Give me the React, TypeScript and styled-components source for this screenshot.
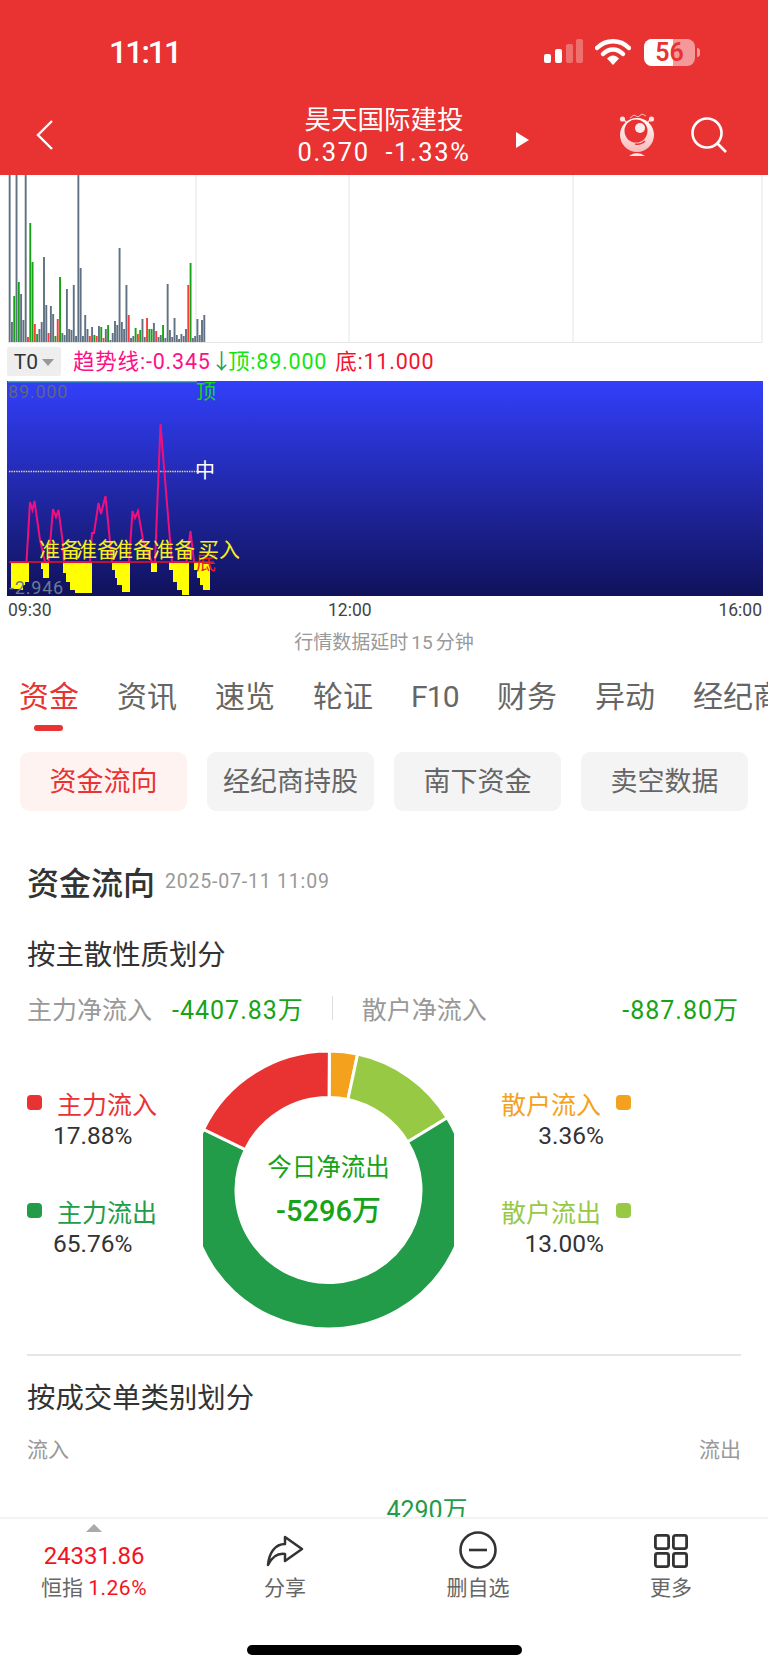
import React from "react";
import styled, { createGlobalStyle } from "styled-components";

const GlobalStyle = createGlobalStyle`
    html, body {
        margin: 0;
        padding: 0;
        background: #fff;
    }
    * {
        box-sizing: border-box;
    }
`;

const FONT = `Roboto, "Noto Sans CJK SC", sans-serif`;

// [颜色, 高度] g=灰 s=绿 r=红
const VOLUME: [string, number][] = [
    ["g", 168], ["g", 20], ["s", 46], ["g", 168], ["s", 60], ["g", 48], ["g", 22], ["g", 168],
    ["r", 5], ["s", 119], ["s", 80], ["r", 18], ["s", 8], ["g", 13], ["g", 20], ["g", 85],
    ["g", 37], ["r", 9], ["g", 36], ["g", 28], ["s", 6], ["r", 23], ["s", 65], ["g", 9],
    ["g", 7], ["g", 53], ["g", 13], ["g", 12], ["g", 57], ["g", 6], ["g", 168], ["g", 74],
    ["g", 6], ["g", 27], ["g", 13], ["r", 6], ["g", 15], ["s", 7], ["r", 6], ["g", 16],
    ["s", 15], ["r", 4], ["g", 13], ["s", 17], ["g", 2], ["g", 9], ["g", 21], ["g", 17],
    ["g", 94], ["g", 20], ["g", 13], ["g", 57], ["r", 27], ["g", 4], ["g", 6], ["s", 14],
    ["r", 8], ["s", 12], ["g", 23], ["g", 5], ["r", 24], ["s", 13], ["s", 13], ["g", 19],
    ["r", 11], ["g", 5], ["g", 7], ["s", 17], ["g", 4], ["g", 58], ["g", 12], ["g", 5],
    ["g", 24], ["g", 7], ["g", 3], ["g", 8], ["g", 6], ["g", 13], ["r", 57], ["s", 79],
    ["g", 4], ["g", 6], ["g", 23], ["g", 7], ["g", 22], ["g", 27],
];

const BAR_COLORS: Record<string, string> = { g: "#5f7183", s: "#17a317", r: "#f83b3b" };

const PINK = [
    [10, 562], [26.5, 562], [30, 502], [32.5, 510], [34.5, 501], [40, 540], [45, 562], [48.5, 562],
    [53, 509], [56, 517], [58.5, 510], [62.5, 540], [64, 562], [90, 562], [92, 533], [94, 533],
    [98.5, 503], [101, 514], [105.5, 496], [112, 562], [129, 562], [132.5, 511], [135, 518],
    [138, 511], [143, 540], [148, 553], [152, 562], [155, 562], [160.5, 424], [170, 540],
    [172, 562], [186.5, 562], [190.5, 531], [194, 562],
];

// x 起点, 终点, 底部折点
const YELLOW: [number, number][][] = [
    [[11, 589], [20, 590], [23, 585], [25, 582], [29, 580]],
    [[41, 569], [43, 578], [49, 578]],
    [[63, 573], [66, 582], [70, 590], [75, 593], [91, 593], [92, 563]],
    [[112, 570], [115, 578], [117, 585], [122, 592], [130, 593]],
    [[151, 572], [157, 572]],
    [[169, 570], [173, 582], [177, 590], [182, 595], [189, 596]],
    [[194, 570], [197, 578], [200, 585], [203, 590], [210, 590]],
];

const yellowPath = (steps: [number, number][]) => {
    const endX = steps[steps.length - 1][0];
    let d = `M${steps[0][0]} 562.5`;
    steps.forEach(([x, y], i) => {
        if (i > 0) d += `L${x} ${steps[i - 1][1]}`;
        d += `L${x} ${y}`;
    });
    return `${d}L${endX} 562.5Z`;
};

const OUTER = 139;
const INNER = 92.5;

const polar = (r: number, pct: number) => {
    const a = (pct / 100) * Math.PI * 2;
    return [137 + r * Math.sin(a), 137 - r * Math.cos(a)];
};

const slice = (from: number, to: number) => {
    const [x1, y1] = polar(OUTER, from);
    const [x2, y2] = polar(OUTER, to);
    const [x3, y3] = polar(INNER, to);
    const [x4, y4] = polar(INNER, from);
    const large = to - from > 50 ? 1 : 0;
    return `M${x1} ${y1}A${OUTER} ${OUTER} 0 ${large} 1 ${x2} ${y2}L${x3} ${y3}A${INNER} ${INNER} 0 ${large} 0 ${x4} ${y4}Z`;
};

const SLICES = [
    { color: "#f4a21d", from: 0.1, to: 3.36 },
    { color: "#97c945", from: 3.36, to: 16.3 },
    { color: "#229c48", from: 16.3, to: 82.2 },
    { color: "#e93333", from: 82.2, to: 100.1 },
];

const TABS = ["资金", "资讯", "速览", "轮证", "F10", "财务", "异动", "经纪商"];
const CHIPS = ["资金流向", "经纪商持股", "南下资金", "卖空数据"];

const StatusIcons = () => (
    <StatusRight>
        <svg width="40" height="26" viewBox="0 0 40 26">
            <rect x="1" y="15" width="7" height="9" rx="2" fill="#fff" />
            <rect x="12" y="10" width="7" height="14" rx="2" fill="#fff" />
            <rect x="23" y="5" width="7" height="19" rx="2" fill="#fff" opacity="0.3" />
            <rect x="33" y="0" width="7" height="24" rx="2" fill="#fff" opacity="0.3" />
        </svg>
        <svg width="36" height="26" viewBox="0 0 36 26">
            <path d="M2 9C11 0 25 0 34 9" fill="none" stroke="#fff" strokeWidth="4.5" strokeLinecap="round" />
            <path d="M8 15C14 9 22 9 28 15" fill="none" stroke="#fff" strokeWidth="4.5" strokeLinecap="round" />
            <path d="M12 19.5C16 15.5 20 15.5 24 19.5L18 26Z" fill="#fff" />
        </svg>
        <Battery>
            <BatteryFill />
            <BatteryText>56</BatteryText>
        </Battery>
        <BatteryTip />
    </StatusRight>
);

const Mascot = () => (
    <svg width="36" height="46" viewBox="0 0 36 46">
        <defs>
            <linearGradient id="mascotBody" x1="0" y1="0" x2="0" y2="1">
                <stop offset="0" stopColor="#fff" />
                <stop offset="1" stopColor="#f8b9b9" />
            </linearGradient>
        </defs>
        <path d="M11 6L15 3L19 5L23 2L27 4" fill="none" stroke="#f9c4c4" strokeWidth="1" />
        <circle cx="3.5" cy="7" r="2.6" fill="#fde3e3" />
        <circle cx="32.5" cy="7" r="2.6" fill="#fde3e3" />
        <path d="M5 8L9 12M31 8L27 12" stroke="#fde3e3" strokeWidth="1.4" />
        <ellipse cx="18" cy="23" rx="17" ry="17" fill="url(#mascotBody)" />
        <circle cx="17" cy="19" r="11.5" fill="#e93333" />
        <circle cx="21" cy="16" r="5" fill="#fff" opacity="0.9" />
        <path d="M16 32Q22 33 26 29" fill="none" stroke="#e93333" strokeWidth="1.4" />
        <path d="M10 44Q18 38 26 44Z" fill="#fde3e3" />
    </svg>
);

const SearchIcon = () => (
    <svg width="36" height="36" viewBox="0 0 36 36">
        <circle cx="16" cy="16" r="14.5" fill="none" stroke="#fff" strokeWidth="2.6" />
        <path d="M26.5 26.5L35 35" stroke="#fff" strokeWidth="2.6" />
    </svg>
);

const App = () => {
    return (
        <Page>
            <GlobalStyle />
            <Header>
                <StatusBar>
                    <Clock>11:11</Clock>
                    <StatusIcons />
                </StatusBar>
                <NavBar>
                    <NavSide>
                        <svg width="18" height="30" viewBox="0 0 18 30">
                            <path d="M16 1L2 15L16 29" fill="none" stroke="#fff" strokeWidth="2.4" />
                        </svg>
                    </NavSide>
                    <NavCenter>
                        <StockName>昊天国际建投</StockName>
                        <StockQuote>0.370&nbsp;&nbsp;-1.33%</StockQuote>
                    </NavCenter>
                    <NavRight>
                        <NextArrow />
                        <Mascot />
                        <SearchIcon />
                    </NavRight>
                </NavBar>
            </Header>

            <VolumeChart viewBox="0 175 768 168" width="768" height="168">
                {[196, 349, 573, 762].map((x) => (
                    <line key={x} x1={x} x2={x} y1="175" y2="342" stroke="#e6e6e6" />
                ))}
                <line x1="8" x2="762" y1="342.5" y2="342.5" stroke="#e6e6e6" />
                {VOLUME.map(([c, h], i) => (
                    <rect
                        key={i}
                        x={8.7 + i * 2.29}
                        y={342 - h}
                        width="1.9"
                        height={h}
                        fill={BAR_COLORS[c]}
                    />
                ))}
            </VolumeChart>

            <IndicatorRow>
                <T0Button>
                    T0
                    <T0Caret />
                </T0Button>
                <IndicatorText $color="#ff0f87">趋势线:-0.345</IndicatorText>
                <IndicatorText $color="#2e9c55">↓</IndicatorText>
                <IndicatorText $color="#12e512" $gap={-5}>
                    顶:89.000
                </IndicatorText>
                <IndicatorText $color="#f5122e" $gap={8}>
                    底:11.000
                </IndicatorText>
            </IndicatorRow>

            <SignalChart viewBox="7 381 756 215" width="756" height="215">
                <defs>
                    <linearGradient id="signalBg" x1="0" y1="0" x2="0" y2="1">
                        <stop offset="0" stopColor="#323ffa" />
                        <stop offset="1" stopColor="#10125a" />
                    </linearGradient>
                </defs>
                <rect x="7" y="381" width="756" height="215" fill="url(#signalBg)" />
                <line x1="8" x2="197" y1="381.5" y2="381.5" stroke="#14e614" strokeWidth="1.4" />
                <text x="8" y="398" fill="#5f6680" fontSize="18" letterSpacing="0.8">89.000</text>
                <text x="196" y="399" fill="#16d816" fontSize="20">顶</text>
                <line x1="9" x2="197" y1="471.5" y2="471.5" stroke="#e8e07a" strokeWidth="1.4" strokeDasharray="1.4 1" />
                <text x="195" y="478" fill="#fff" fontSize="20">中</text>
                {YELLOW.map((s, i) => (
                    <path key={i} d={yellowPath(s)} fill="#ffff00" />
                ))}
                <polyline
                    points={PINK.map((p) => p.join(",")).join(" ")}
                    fill="none"
                    stroke="#f00f7d"
                    strokeWidth="2"
                />
                <line x1="9" x2="214" y1="562" y2="562" stroke="#f50f1e" strokeWidth="1.4" />
                <text x="196" y="570" fill="#f01e1e" fontSize="20">底</text>
                {[39, 76, 112, 153].map((x) => (
                    <text key={x} x={x} y="557" fill="#f5f01e" fontSize="21">准备</text>
                ))}
                <text x="198" y="557" fill="#f5f01e" fontSize="21">买入</text>
                <text x="9" y="594" fill="#6a7a95" fontSize="18" letterSpacing="0.8">-2.946</text>
            </SignalChart>

            <TimeAxis>
                <span>09:30</span>
                <span>12:00</span>
                <span>16:00</span>
            </TimeAxis>
            <DelayNote>
                行情数据延时<DelayDigits>15</DelayDigits>分钟
            </DelayNote>

            <TabRow>
                {TABS.map((t, i) => (
                    <Tab key={t} $active={i === 0} $tight={t === "F10"}>
                        {t}
                    </Tab>
                ))}
            </TabRow>

            <ChipRow>
                {CHIPS.map((c, i) => (
                    <Chip key={c} $active={i === 0}>
                        {c}
                    </Chip>
                ))}
            </ChipRow>

            <Content>
                <TitleRow>
                    <Title>资金流向</Title>
                    <TitleDate>2025-07-11 11:09</TitleDate>
                </TitleRow>
                <SubTitle $top={35}>按主散性质划分</SubTitle>
                <NetRow>
                    <NetLabel>主力净流入</NetLabel>
                    <NetValue>-4407.83万</NetValue>
                    <NetDivider />
                    <NetLabel>散户净流入</NetLabel>
                    <NetValue $right>-887.80万</NetValue>
                </NetRow>

                <DonutRow>
                    <LegendColumn>
                        <LegendItem>
                            <LegendName $color="#e93333">
                                <LegendDot $color="#e93333" />
                                主力流入
                            </LegendName>
                            <LegendValue>17.88%</LegendValue>
                        </LegendItem>
                        <LegendItem>
                            <LegendName $color="#229c48">
                                <LegendDot $color="#229c48" />
                                主力流出
                            </LegendName>
                            <LegendValue>65.76%</LegendValue>
                        </LegendItem>
                    </LegendColumn>
                    <Donut>
                        <svg width="251" height="276" viewBox="11.5 -1 251 276">
                            {SLICES.map((s) => (
                                <path key={s.color} d={slice(s.from, s.to)} fill={s.color} stroke="#fff" strokeWidth="3" />
                            ))}
                        </svg>
                        <DonutCenter>
                            <DonutCaption>今日净流出</DonutCaption>
                            <DonutAmount>-5296万</DonutAmount>
                        </DonutCenter>
                    </Donut>
                    <LegendColumn $right>
                        <LegendItem $right>
                            <LegendName $color="#f4a21d" $right>
                                <LegendDot $color="#f4a21d" />
                                散户流入
                            </LegendName>
                            <LegendValue $right>3.36%</LegendValue>
                        </LegendItem>
                        <LegendItem $right>
                            <LegendName $color="#97c945" $right>
                                <LegendDot $color="#97c945" />
                                散户流出
                            </LegendName>
                            <LegendValue $right>13.00%</LegendValue>
                        </LegendItem>
                    </LegendColumn>
                </DonutRow>

                <Separator />
                <SubTitle $top={23}>按成交单类别划分</SubTitle>
                <FlowHead>
                    <span>流入</span>
                    <span>流出</span>
                </FlowHead>
                <FlowAmount>4290万</FlowAmount>
            </Content>

            <Footer>
                <FooterGrid>
                    <FooterItem>
                        <FooterTop>
                            <IndexCaret />
                            <IndexValue>24331.86</IndexValue>
                        </FooterTop>
                        <FooterLabel>
                            恒指 <IndexChange>1.26%</IndexChange>
                        </FooterLabel>
                    </FooterItem>
                    <FooterItem>
                        <FooterTop>
                            <svg width="38" height="34" viewBox="0 0 38 34">
                                <path
                                    d="M19 2L36 14L19 26V19C12 18 6 22 2 30C3 18 9 9 19 9Z"
                                    fill="none"
                                    stroke="#333"
                                    strokeWidth="2.5"
                                    strokeLinejoin="round"
                                />
                            </svg>
                        </FooterTop>
                        <FooterLabel>分享</FooterLabel>
                    </FooterItem>
                    <FooterItem>
                        <FooterTop>
                            <svg width="38" height="38" viewBox="0 0 38 38">
                                <circle cx="19" cy="19" r="17.5" fill="none" stroke="#333" strokeWidth="2.6" />
                                <path d="M10 19H28" stroke="#333" strokeWidth="2.6" />
                            </svg>
                        </FooterTop>
                        <FooterLabel>删自选</FooterLabel>
                    </FooterItem>
                    <FooterItem>
                        <FooterTop>
                            <svg width="34" height="35" viewBox="0 0 34 35">
                                {[1.4, 19.4].map((x) =>
                                    [1.4, 19.4].map((y) => (
                                        <rect
                                            key={`${x}-${y}`}
                                            x={x}
                                            y={y}
                                            width="13.2"
                                            height="13.2"
                                            rx="2"
                                            fill="none"
                                            stroke="#333"
                                            strokeWidth="2.8"
                                        />
                                    )),
                                )}
                            </svg>
                        </FooterTop>
                        <FooterLabel>更多</FooterLabel>
                    </FooterItem>
                </FooterGrid>
                <HomeBar />
            </Footer>
        </Page>
    );
};

const Page = styled.div`
    display: flex;
    flex-direction: column;
    width: 768px;
    height: 1665px;
    overflow: hidden;
    background: #fff;
    font-family: ${FONT};
`;

const Header = styled.header`
    flex: none;
    height: 175px;
    background: #e93232;
    color: #fff;
`;

const StatusBar = styled.div`
    display: flex;
    align-items: center;
    justify-content: space-between;
    height: 104px;
    padding: 0 68px 0 109px;
`;

const Clock = styled.div`
    font-size: 32px;
    font-weight: 500;
    letter-spacing: -2px;
`;

const StatusRight = styled.div`
    display: flex;
    align-items: center;
    gap: 12px;
`;

const Battery = styled.div`
    position: relative;
    width: 51px;
    height: 27px;
    margin-left: 1px;
    overflow: hidden;
    border-radius: 8px;
    background: rgba(255, 255, 255, 0.5);
`;

const BatteryFill = styled.div`
    width: 56%;
    height: 100%;
    background: #fff;
`;

const BatteryText = styled.span`
    position: absolute;
    inset: 0;
    color: #e93232;
    font-size: 25px;
    font-weight: 600;
    line-height: 27px;
    text-align: center;
`;

const BatteryTip = styled.div`
    width: 3px;
    height: 9px;
    margin-left: -10px;
    border-radius: 0 3px 3px 0;
    background: rgba(255, 255, 255, 0.5);
`;

const NavBar = styled.div`
    display: grid;
    grid-template-columns: 1fr 200px 1fr;
    height: 70px;
`;

const NavSide = styled.div`
    display: flex;
    align-items: center;
    padding: 0 0 8px 36px;
`;

const NavCenter = styled.div`
    display: flex;
    flex-direction: column;
    align-items: center;
`;

const StockName = styled.div`
    font-size: 26.5px;
    line-height: 32px;
`;

const StockQuote = styled.div`
    font-size: 25.5px;
    line-height: 32px;
    letter-spacing: 1.6px;
    white-space: nowrap;
`;

const NavRight = styled.div`
    display: flex;
    align-items: center;
    padding: 0 0 8px 32px;

    svg:first-of-type {
        margin-left: 90px;
    }
    svg:last-of-type {
        margin-left: 36px;
    }
`;

const NextArrow = styled.div`
    width: 0;
    height: 0;
    margin-top: 10px;
    border-top: 8px solid transparent;
    border-bottom: 8px solid transparent;
    border-left: 13px solid #fff;
`;

const VolumeChart = styled.svg`
    display: block;
    flex: none;
`;

const IndicatorRow = styled.div`
    display: flex;
    flex: none;
    align-items: center;
    height: 38px;
    padding-left: 7px;
`;

const T0Button = styled.div`
    display: flex;
    align-items: center;
    justify-content: center;
    gap: 4px;
    width: 54px;
    height: 29px;
    margin: 0 12px 1px 0;
    border-radius: 2px;
    background: #eeeeee;
    color: #333;
    font-size: 21px;
`;

const T0Caret = styled.span`
    width: 0;
    height: 0;
    margin-top: 2px;
    border-top: 7px solid #999;
    border-left: 6px solid transparent;
    border-right: 6px solid transparent;
`;

const IndicatorText = styled.span<{ $color: string; $gap?: number }>`
    margin: 0 0 6px ${({ $gap }) => $gap ?? 0}px;
    color: ${({ $color }) => $color};
    font-size: 21.5px;
    letter-spacing: 0.8px;
    white-space: nowrap;
`;

const SignalChart = styled.svg`
    display: block;
    flex: none;
    margin-left: 7px;
    font-family: ${FONT};
`;

const TimeAxis = styled.div`
    display: grid;
    flex: none;
    grid-template-columns: 320px auto 1fr;
    height: 28px;
    padding: 0 6px 0 8px;
    color: #444;
    font-size: 17.5px;
    line-height: 28px;

    span:last-child {
        justify-self: end;
    }
`;

const DelayNote = styled.div`
    flex: none;
    height: 34px;
    color: #999;
    font-size: 19px;
    line-height: 38px;
    text-align: center;
`;

const DelayDigits = styled.span`
    margin: 0 3px;
`;

const TabRow = styled.div`
    display: flex;
    flex: none;
    gap: 38px;
    height: 78px;
    padding-left: 19px;
    white-space: nowrap;
`;

const Tab = styled.div<{ $active?: boolean; $tight?: boolean }>`
    position: relative;
    color: ${({ $active }) => ($active ? "#e93232" : "#666")};
    font-size: 30px;
    letter-spacing: ${({ $tight }) => ($tight ? "-0.8px" : "0")};
    line-height: 78px;

    &::after {
        content: "";
        display: ${({ $active }) => ($active ? "block" : "none")};
        position: absolute;
        left: 15px;
        top: 67px;
        width: 29px;
        height: 6px;
        border-radius: 3px;
        background: #e93232;
    }
`;

const ChipRow = styled.div`
    display: flex;
    flex: none;
    gap: 20px;
    padding: 16px 20px 0;
`;

const Chip = styled.div<{ $active?: boolean }>`
    width: 167px;
    height: 59px;
    border-radius: 9px;
    background: ${({ $active }) => ($active ? "#fff3f2" : "#f4f4f4")};
    color: ${({ $active }) => ($active ? "#e93232" : "#666")};
    font-size: 27px;
    line-height: 61px;
    text-align: center;
`;

const Content = styled.main`
    flex: 1;
    min-height: 0;
    overflow: hidden;
    padding: 0 27px;
`;

const TitleRow = styled.div`
    display: flex;
    align-items: center;
    gap: 10px;
    height: 40px;
    margin-top: 50px;
`;

const Title = styled.h2`
    margin: 0;
    color: #333;
    font-size: 32px;
    font-weight: 500;
`;

const TitleDate = styled.span`
    margin-top: 1px;
    color: #999;
    font-size: 19.5px;
    letter-spacing: 0.8px;
`;

const SubTitle = styled.h3<{ $top: number }>`
    margin: ${({ $top }) => $top}px 0 0;
    color: #333;
    font-size: 28.4px;
    font-weight: 400;
    line-height: 40px;
`;

const NetRow = styled.div`
    display: flex;
    align-items: center;
    height: 36px;
    margin-top: 14px;
    padding-right: 2px;
    font-size: 25px;
`;

const NetLabel = styled.span`
    color: #999;
`;

const NetValue = styled.span<{ $right?: boolean }>`
    margin-left: ${({ $right }) => ($right ? "auto" : "20px")};
    color: #17a317;
    letter-spacing: 1px;
`;

const NetDivider = styled.i`
    width: 1px;
    height: 24px;
    margin: 0 29px 0 28px;
    background: #ddd;
`;

const DonutRow = styled.div`
    display: grid;
    grid-template-columns: 176px 251px 177px;
    height: 276px;
    margin-top: 26px;
`;

const LegendColumn = styled.div<{ $right?: boolean }>`
    display: flex;
    flex-direction: column;
    align-items: ${({ $right }) => ($right ? "flex-end" : "flex-start")};
    gap: 43px;
    padding-top: 34px;
`;

const LegendItem = styled.div<{ $right?: boolean }>`
    display: flex;
    flex-direction: column;
    align-items: ${({ $right }) => ($right ? "flex-end" : "flex-start")};
`;

const LegendName = styled.div<{ $color: string; $right?: boolean }>`
    display: flex;
    flex-direction: ${({ $right }) => ($right ? "row-reverse" : "row")};
    align-items: center;
    gap: 15px;
    height: 33px;
    color: ${({ $color }) => $color};
    font-size: 25px;
`;

const LegendDot = styled.i<{ $color: string }>`
    width: 15px;
    height: 15px;
    border-radius: 4px;
    background: ${({ $color }) => $color};
`;

const LegendValue = styled.div<{ $right?: boolean }>`
    height: 30px;
    margin-top: 2px;
    padding: ${({ $right }) => ($right ? "0 27px 0 0" : "0 0 0 26px")};
    color: #333;
    font-size: 24.5px;
    line-height: 30px;
`;

const Donut = styled.div`
    position: relative;
    width: 251px;
    height: 276px;

    svg {
        display: block;
    }
`;

const DonutCenter = styled.div`
    position: absolute;
    inset: 0;
    display: flex;
    flex-direction: column;
    align-items: center;
    padding-top: 98px;
    color: #17a317;
`;

const DonutCaption = styled.div`
    font-size: 24.5px;
    line-height: 36px;
`;

const DonutAmount = styled.div`
    margin-top: 7px;
    font-size: 29px;
    font-weight: 500;
    line-height: 36px;
`;

const Separator = styled.div`
    height: 2px;
    margin-top: 26px;
    background: #e6e6e6;
`;

const FlowHead = styled.div`
    display: flex;
    justify-content: space-between;
    height: 30px;
    margin-top: 16px;
    color: #999;
    font-size: 21px;
    line-height: 30px;
`;

const FlowAmount = styled.div`
    margin-top: 28px;
    padding-left: 86px;
    color: #229c48;
    font-size: 25px;
    line-height: 36px;
    text-align: center;
`;

const Footer = styled.footer`
    flex: none;
    height: 148px;
    border-top: 2px solid #f3f3f3;
    background: #fff;
`;

const FooterGrid = styled.div`
    display: grid;
    grid-template-columns: 188px 194px 192px 194px;
`;

const FooterItem = styled.div`
    display: flex;
    flex-direction: column;
    align-items: center;
`;

const FooterTop = styled.div`
    display: flex;
    flex-direction: column;
    align-items: center;
    justify-content: flex-end;
    height: 50px;
`;

const IndexCaret = styled.span`
    width: 0;
    height: 0;
    margin-bottom: 9px;
    border-bottom: 8px solid #aaa;
    border-left: 8px solid transparent;
    border-right: 8px solid transparent;
`;

const IndexValue = styled.div`
    margin-bottom: -2px;
    color: #f5121e;
    font-size: 24px;
    line-height: 30px;
`;

const FooterLabel = styled.div`
    margin-top: 4px;
    color: #666;
    font-size: 21px;
    line-height: 30px;
`;

const IndexChange = styled.span`
    color: #f5121e;
    letter-spacing: 0.5px;
`;

const HomeBar = styled.div`
    width: 275px;
    height: 10px;
    margin: 42px 0 0 247px;
    border-radius: 5px;
    background: #000;
`;

export default App;
